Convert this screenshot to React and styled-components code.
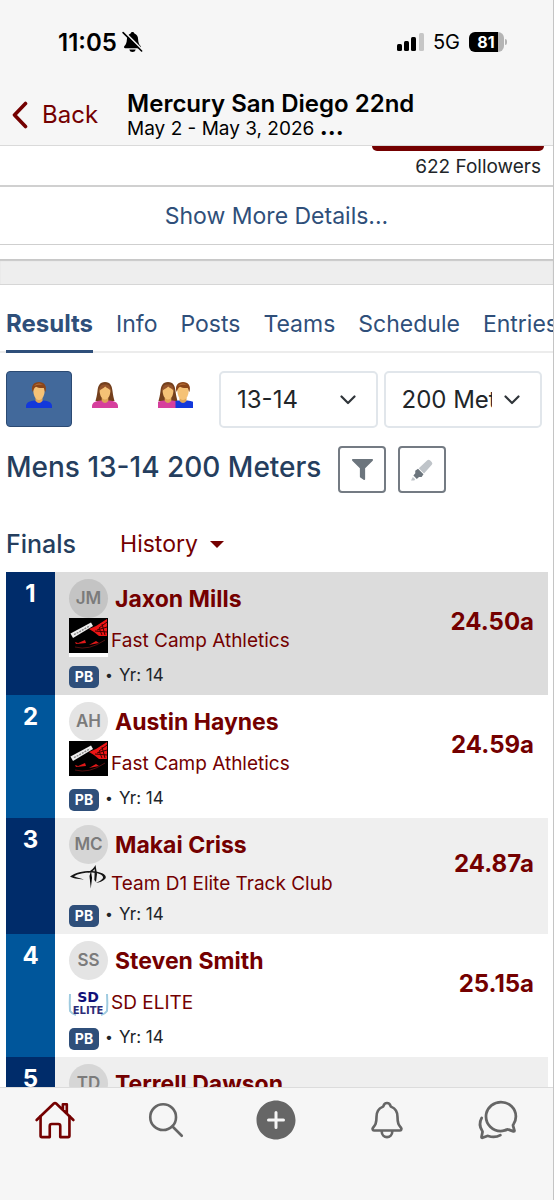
import React from "react";
import styled, { createGlobalStyle, css } from "styled-components";
import {
  IoHomeOutline,
  IoSearchOutline,
  IoAddCircle,
  IoNotificationsOutline,
  IoChatbubblesOutline,
} from "react-icons/io5";
import { FaFilter } from "react-icons/fa";

const GlobalStyle = createGlobalStyle`
  * { box-sizing: border-box; }
  body {
    margin: 0;
    font-family: Inter, "Liberation Sans", sans-serif;
    color: #212529;
    background: #fff;
  }
  button, select { font: inherit; color: inherit; margin: 0; }
  button { cursor: pointer; }
  svg { display: block; }
`;

const maroon = "#740000";
const navy = "#2f4f7a";

const Screen = styled.div`
  height: 100vh;
  display: flex;
  flex-direction: column;
  border-right: 1px solid #c4c4c4;
`;

const StatusBar = styled.div`
  display: flex;
  justify-content: space-between;
  align-items: center;
  height: 84px;
  padding: 0 46px 0 58px;
  background: #f6f6f6;
  color: #000;
`;

const StatusGroup = styled.div`
  display: flex;
  align-items: center;
  gap: ${(p) => p.$gap}px;
`;

const Clock = styled.span`
  font-size: 24px;
  font-weight: 600;
`;

const Network = styled.span`
  font-size: 20px;
`;

const Battery = styled.span`
  display: flex;
  align-items: center;
  gap: 1px;
`;

const BatteryLevel = styled.span`
  width: 35px;
  height: 20px;
  padding-right: 1px;
  border-radius: 6px;
  background: linear-gradient(90deg, #000 84%, #b4b4b4 84%);
  color: #fff;
  font-size: 16px;
  font-weight: 700;
  line-height: 20px;
  text-align: center;
`;

const BatteryTip = styled.span`
  width: 2px;
  height: 6px;
  border-radius: 0 2px 2px 0;
  background: #b4b4b4;
`;

const TitleBar = styled.header`
  display: flex;
  align-items: center;
  gap: 29px;
  height: 62px;
  padding: 0 12px;
  background: #f6f6f6;
  border-bottom: 1px solid #dadada;
`;

const BackButton = styled.button`
  display: flex;
  align-items: center;
  gap: 14px;
  padding: 0;
  border: 0;
  background: none;
  color: ${maroon};
  font-size: 24px;
`;

const TitleBlock = styled.div`
  color: #000;
`;

const MeetTitle = styled.h1`
  margin: 0;
  font-size: 24px;
  line-height: 27px;
  font-weight: 600;
`;

const MeetDates = styled.p`
  margin: 0;
  font-size: 19px;
  line-height: 22px;
  b { font-size: 24px; line-height: 20px; font-weight: 700; }
`;

const Content = styled.main`
  flex: 1;
  min-height: 0;
  overflow: hidden auto;
  scrollbar-width: none;
`;

const FollowArea = styled.section`
  display: flex;
  flex-direction: column;
  align-items: flex-end;
  padding: 0 9px;
  height: 41px;
  border-bottom: 2px solid #d0d0d0;
`;

const FollowButton = styled.button`
  width: 172px;
  height: 5px;
  padding: 0;
  border: 0;
  border-radius: 0 0 8px 8px;
  background: ${maroon};
`;

const Followers = styled.span`
  padding-right: 3px;
  font-size: 19px;
  line-height: 32px;
`;

const MoreButton = styled.button`
  display: block;
  width: 100%;
  height: 58px;
  padding: 0;
  border: 0;
  border-bottom: 1px solid #cfcfcf;
  background: #fff;
  color: ${navy};
  font-size: 23px;
`;

const Divider = styled.div`
  height: 40px;
  border-top: 14px solid #fff;
  border-bottom: 1px solid #d6d6d6;
  background: #eee;
  box-shadow: inset 0 2px 1px #c8c8c8;
`;

const Tabs = styled.nav`
  display: flex;
  gap: 23px;
  height: 68px;
  padding: 0 6px;
  overflow: hidden;
  box-shadow: inset 0 -2px 0 #ececec;
`;

const Tab = styled.a`
  display: flex;
  align-items: center;
  padding-top: 12px;
  border-bottom: 3px solid ${(p) => (p.$active ? navy : "transparent")};
  color: ${navy};
  font-size: ${(p) => (p.$active ? 24 : 23)}px;
  font-weight: ${(p) => (p.$active ? 700 : 400)};
  text-decoration: none;
  white-space: nowrap;
`;

const Filters = styled.div`
  display: flex;
  gap: 6px;
  padding: 18px 11px 0 6px;
`;

const GenderGroup = styled.div`
  display: flex;
`;

const GenderButton = styled.button`
  display: flex;
  height: 56px;
  padding: 9px 19px 0;
  border: 1px solid ${(p) => (p.$active ? "#2b4a73" : "transparent")};
  border-radius: 4px;
  background: ${(p) => (p.$active ? "#42699b" : "transparent")};
`;

const SelectBox = styled.label`
  flex: 1;
  min-width: 0;
  display: grid;
  align-items: center;
  > * { grid-area: 1 / 1; }
  > svg { justify-self: end; margin-right: 22px; pointer-events: none; }
`;

const Select = styled.select`
  appearance: none;
  width: 100%;
  height: 57px;
  padding: 0 48px 0 16px;
  border: 2px solid #e1e6eb;
  border-radius: 5px;
  background: #fff;
  font-size: 24px;
`;

const EventRow = styled.div`
  display: flex;
  align-items: center;
  gap: 12px;
  padding: 18px 6px 0;
`;

const EventTitle = styled.h2`
  margin: 0;
  padding: 0 5px 6px 0;
  color: #253e5e;
  font-size: 28px;
  line-height: 36px;
  font-weight: 500;
  white-space: nowrap;
`;

const ToolButton = styled.button`
  display: flex;
  align-items: center;
  justify-content: center;
  width: 48px;
  height: 47px;
  padding: 0;
  border: 2px solid #747b83;
  border-radius: 4px;
  background: #fff;
  color: #6c757d;
`;

const RoundRow = styled.div`
  display: flex;
  align-items: center;
  gap: 44px;
  height: 79px;
  padding: 23px 6px 0;
`;

const RoundTitle = styled.h3`
  margin: 0;
  color: #253e5e;
  font-size: 25px;
  font-weight: 500;
`;

const HistoryButton = styled.button`
  display: flex;
  align-items: center;
  gap: 12px;
  padding: 0;
  border: 0;
  background: none;
  color: ${maroon};
  font-size: 23px;
`;

const TableWrap = styled.div`
  padding: 0 5px 0 6px;
`;

const Table = styled.table`
  width: 100%;
  border-collapse: collapse;
`;

const Row = styled.tr`
  background: ${(p) => p.$bg};
`;

const cell = css`
  padding: 0;
  vertical-align: top;
`;

const RankCell = styled.td`
  ${cell}
  width: 49px;
  padding-top: 7px;
  background: ${(p) => (p.$dark ? "#002c6a" : "#00569b")};
  color: #fff;
  font-size: 24px;
  line-height: 30px;
  font-weight: 700;
  text-align: center;
`;

const AthleteCell = styled.td`
  ${cell}
  padding: 7px 0 7px 14px;
`;

const TimeCell = styled.td`
  padding: 0 14px 25px 0;
  text-align: right;
  vertical-align: middle;
`;

const TimeLink = styled.a`
  color: ${maroon};
  font-size: 24px;
  font-weight: 700;
  text-decoration: none;
`;

const AthleteLine = styled.div`
  display: flex;
  align-items: center;
  gap: 7px;
`;

const Avatar = styled.span`
  width: 39px;
  height: 39px;
  border-radius: 50%;
  background: ${(p) => p.$bg};
  color: #7b7b7b;
  font-size: 17px;
  line-height: 39px;
  font-weight: 600;
  text-align: center;
`;

const AthleteLink = styled.a`
  color: ${maroon};
  font-size: 23px;
  font-weight: 700;
  text-decoration: none;
`;

const TeamLine = styled.div`
  display: flex;
  align-items: center;
  gap: 3px;
  height: ${(p) => (p.$short ? 41 : 48)}px;
`;

const LogoSlot = styled.span`
  align-self: ${(p) => p.$align};
  width: 39px;
`;

const TeamLink = styled.a`
  padding-bottom: 2px;
  color: ${maroon};
  font-size: 19px;
  line-height: 24px;
  text-decoration: none;
`;

const MetaLine = styled.div`
  display: flex;
  align-items: flex-start;
  gap: 6px;
  height: 22px;
  font-size: 17px;
  line-height: 18px;
`;

const Dot = styled.span`
  font-size: 14px;
`;

const Badge = styled.span`
  width: 30px;
  height: 22px;
  border-radius: 5px;
  background: ${navy};
  color: #fff;
  font-size: 14px;
  line-height: 22px;
  font-weight: 700;
  text-align: center;
`;

const BottomNav = styled.nav`
  display: flex;
  height: 113px;
  padding-top: 10px;
  border-top: 1px solid #dcdcdc;
  background: #f6f6f6;
`;

const NavButton = styled.button`
  display: flex;
  flex: 1;
  justify-content: center;
  align-items: center;
  height: 44px;
  padding: 0;
  border: 0;
  background: none;
  color: ${(p) => (p.$active ? maroon : "#666")};
`;

const MutedBell = () => (
  <svg width="21" height="22" viewBox="0 0 21 22" aria-hidden="true">
    <path d="M10.5 1C11.6 1 12.2 1.6 12.4 2.5C15 3.4 16 5.6 16.1 8.2C16.3 12 17.2 13.6 18.6 15.1C19.3 16 19 17.3 17.8 17.3H3.2C2 17.3 1.7 16 2.4 15.1C3.8 13.6 4.7 12 4.9 8.2C5 5.6 6 3.4 8.6 2.5C8.8 1.6 9.4 1 10.5 1Z" fill="#000" />
    <path d="M7.3 18.6H13.7C13.3 20.3 12.1 21.1 10.5 21.1S7.7 20.3 7.3 18.6Z" fill="#000" />
    <path d="M2.4 .8L20.6 19" stroke="#f6f6f6" strokeWidth="1.7" />
    <path d="M1.1 1.6L19.6 20" stroke="#000" strokeWidth="1.6" strokeLinecap="round" />
  </svg>
);

const Signal = () => (
  <svg width="27" height="18" viewBox="0 0 27 18" aria-hidden="true">
    <rect x="0" y="11" width="5" height="7" rx="1.5" />
    <rect x="7" y="8" width="5" height="10" rx="1.5" />
    <rect x="14" y="4" width="5" height="14" rx="1.5" />
    <rect x="22" y="0" width="5" height="18" rx="1.5" fill="#c6c6c6" />
  </svg>
);

const BackChevron = () => (
  <svg width="16" height="28" viewBox="0 0 16 28" fill="none" aria-hidden="true">
    <path d="M13.5 2.5L2.5 14L13.5 25.5" stroke="currentColor" strokeWidth="3.6" strokeLinecap="round" strokeLinejoin="round" />
  </svg>
);

const SelectChevron = () => (
  <svg width="16" height="10" viewBox="0 0 16 10" fill="none" aria-hidden="true">
    <path d="M1.5 1.5L8 8L14.5 1.5" stroke="#30353a" strokeWidth="2.2" strokeLinecap="round" strokeLinejoin="round" />
  </svg>
);

const Caret = () => (
  <svg width="14" height="7" viewBox="0 0 14 7" aria-hidden="true">
    <path d="M0 0H14L7 7Z" fill="currentColor" />
  </svg>
);

const Highlighter = () => (
  <svg width="22" height="22" viewBox="0 0 22 22" aria-hidden="true">
    <path d="M7.8 9.2L16.3 1.2Q17.7 0 19.2 1.4L20.7 3Q22 4.5 20.8 5.8L13 14.5Z" fill="#bfc4c9" />
    <path d="M7 9.8L12.5 15.3L10.6 18.1L8 18L5.8 20L2.4 16.5L4.3 14.3L4.2 11.8Z" fill="#6c757d" />
    <path d="M1.8 18L4.2 20.3L3.3 21.4L0 21.5Z" fill="#bfc4c9" />
  </svg>
);

const Man = () => (
  <g>
    <path d="M0 27V24.5C.5 21 4 20 8.5 19.4H17.5C22 20 25.5 21 26 24.5V27Z" fill="#1238db" />
    <path d="M9.5 17H16.5V20Q13 24 9.5 20Z" fill="#dda456" />
    <path d="M7.4 9C7.4 5 10 3 13 3S18.6 5 18.6 9C19 14 16.3 19 13 19S7 14 7.4 9Z" fill="#f5c276" />
    <path d="M6.6 11C4.5 5 7.8 1 13 1S21.4 5 19.4 11C18.5 10 18.5 8.3 17.8 7C14 7.2 11.6 6.8 10 5.8C8 7 7.6 9 6.6 11Z" fill="#8a4519" />
    <path d="M8 5C10 2 14 1.5 17 4C14 3.6 11 3.6 8 5Z" fill="#b26b35" />
  </g>
);

const Woman = () => (
  <g>
    <path d="M13 1C7.5 1 6 5 5.5 10C5 14.5 4.3 17 3.5 20H22.5C21.7 17 21 14.5 20.5 10C20 5 18.5 1 13 1Z" fill="#74401d" />
    <path d="M0 27V24.5C.5 21 4 20 8.5 19.4H17.5C22 20 25.5 21 26 24.5V27Z" fill="#d63f9d" />
    <path d="M9.7 16.5H16.3V20Q13 24.2 9.7 20Z" fill="#dda456" />
    <path d="M7.6 9C8 6 10 4.5 13 4.5S18 6 18.4 9C18.6 14 16.2 18.5 13 18.5S7.4 14 7.6 9Z" fill="#f5c276" />
    <path d="M7.4 10C7.4 5 9 3.6 13 3.6S18.6 5 18.6 10C17.5 7.5 15 7.2 13.2 5.4C11.8 7.5 8.6 7.7 7.4 10Z" fill="#95532a" />
  </g>
);

const Couple = () => (
  <svg width="35" height="27" viewBox="3 0 35 27" aria-hidden="true">
    <clipPath id="man-in-front">
      <path d="M0 0H40V27H20.5V18.5H0Z" />
    </clipPath>
    <Woman />
    <g clipPath="url(#man-in-front)">
      <g transform="translate(15 0)">
        <Man />
      </g>
    </g>
  </svg>
);

const FastCampLogo = () => (
  <svg width="39" height="39" viewBox="0 0 39 39" role="img" aria-label="Fast Camp Athletics logo">
    <path d="M0 35H39V39H0Z" fill="#fff" />
    <path d="M0 0H39V35H0Z" />
    <path d="M20 11L27 8L38 1V18L30 18L25 14Z" fill="#ed1515" />
    <path d="M38 4L30 10M38 9L28 12M38 14L26 13M33 6L36 17M30 10L33 17" stroke="#3a0000" fill="none" />
    <path d="M7 26L16 22L17 25ZM20 27L27 23L30 25ZM6 24L9 25L7 26Z" fill="#e01818" />
    <path d="M6 29Q20 33 36 22" stroke="#551111" fill="none" />
    <path d="M1.5 15.5L22 4.5L24 8L4 20Z" fill="#eee" />
    <path d="M5 16.7L21 7.8" stroke="#888" strokeWidth="1.4" strokeDasharray="2 1" />
  </svg>
);

const D1Logo = () => (
  <svg width="39" height="26" viewBox="0 0 39 26" role="img" aria-label="Team D1 logo">
    <path d="M15 15.5C8 15 3 14 1 12.5C7 8 17 6.5 25 7.2C34 8 39 12 36 15C34 17.5 30 18.5 27 18.8C32 16.8 36 14 33 11.5C29 7.5 13 7.5 5 12.2C8 13.5 12 14.2 15 15.5Z" fill="#161616" />
    <path d="M22 7L23 14L21.8 24.5L20.5 12Z" />
    <path d="M18.5 8.5Q24 6 26.5 1L28 10L27 18L25.3 16L25.8 5Q23 8.5 18.5 8.5Z" fill="#161616" />
  </svg>
);

const LogoText = styled.text`
  font-family: "DejaVu Sans", sans-serif;
  font-weight: 700;
  text-anchor: middle;
`;

const SdLogo = () => (
  <svg width="39" height="28" viewBox="0 0 39 28" overflow="visible" role="img" aria-label="SD Elite logo">
    <path d="M1 4Q.5 14 1 21Q3 24 7 25M38 4Q38.7 14 38 21Q36 24 32 25" stroke="#9fcbe0" strokeWidth="2" fill="none" />
    <LogoText x="19" y="12" fontSize="14" fill="#11117a">SD</LogoText>
    <LogoText x="19" y="24" fontSize="10" fill="#2c2c78">ELITE</LogoText>
  </svg>
);

const logos = { fast: FastCampLogo, d1: D1Logo, sd: SdLogo };

const results = [
  { rank: 1, initials: "JM", name: "Jaxon Mills", team: "Fast Camp Athletics", logo: "fast", time: "24.50a", bg: "#dcdcdc", avatar: "#c4c4c4" },
  { rank: 2, initials: "AH", name: "Austin Haynes", team: "Fast Camp Athletics", logo: "fast", time: "24.59a", bg: "#fff", avatar: "#e4e4e4" },
  { rank: 3, initials: "MC", name: "Makai Criss", team: "Team D1 Elite Track Club", logo: "d1", time: "24.87a", bg: "#efefef", avatar: "#d6d6d6" },
  { rank: 4, initials: "SS", name: "Steven Smith", team: "SD ELITE", logo: "sd", time: "25.15a", bg: "#fff", avatar: "#e4e4e4" },
  { rank: 5, initials: "TD", name: "Terrell Dawson", bg: "#efefef", avatar: "#d6d6d6" },
];

function ResultRow({ result }) {
  const Logo = logos[result.logo];
  return (
    <Row $bg={result.bg}>
      <RankCell $dark={result.rank % 2 === 1}>{result.rank}</RankCell>
      <AthleteCell>
        <AthleteLine>
          <Avatar $bg={result.avatar}>{result.initials}</Avatar>
          <AthleteLink href="#athlete">{result.name}</AthleteLink>
        </AthleteLine>
        {result.team && (
          <>
            <TeamLine $short={result.logo === "d1"}>
              <LogoSlot $align={result.logo === "sd" ? "center" : "flex-start"}>
                <Logo />
              </LogoSlot>
              <TeamLink href="#team">{result.team}</TeamLink>
            </TeamLine>
            <MetaLine>
              <Badge>PB</Badge>
              <Dot>•</Dot>
              <span>Yr: 14</span>
            </MetaLine>
          </>
        )}
      </AthleteCell>
      <TimeCell>{result.time && <TimeLink href="#result">{result.time}</TimeLink>}</TimeCell>
    </Row>
  );
}

const tabs = ["Results", "Info", "Posts", "Teams", "Schedule", "Entries"];

export default function App() {
  return (
    <Screen>
      <GlobalStyle />
      <StatusBar>
        <StatusGroup $gap={5}>
          <Clock>11:05</Clock>
          <MutedBell />
        </StatusGroup>
        <StatusGroup $gap={9}>
          <Signal />
          <Network>5G</Network>
          <Battery>
            <BatteryLevel>81</BatteryLevel>
            <BatteryTip />
          </Battery>
        </StatusGroup>
      </StatusBar>
      <TitleBar>
        <BackButton type="button">
          <BackChevron />
          Back
        </BackButton>
        <TitleBlock>
          <MeetTitle>Mercury San Diego 22nd</MeetTitle>
          <MeetDates>
            May 2 - May 3, 2026 <b>...</b>
          </MeetDates>
        </TitleBlock>
      </TitleBar>
      <Content>
        <FollowArea>
          <FollowButton type="button" aria-label="Follow" />
          <Followers>622 Followers</Followers>
        </FollowArea>
        <MoreButton type="button">Show More Details...</MoreButton>
        <Divider />
        <Tabs>
          {tabs.map((tab, i) => (
            <Tab key={tab} href={`#${tab.toLowerCase()}`} $active={i === 0}>
              {tab}
            </Tab>
          ))}
        </Tabs>
        <Filters>
          <GenderGroup>
            <GenderButton type="button" aria-label="Men" $active>
              <svg width="26" height="27" viewBox="0 0 26 27"><Man /></svg>
            </GenderButton>
            <GenderButton type="button" aria-label="Women">
              <svg width="26" height="27" viewBox="0 0 26 27"><Woman /></svg>
            </GenderButton>
            <GenderButton type="button" aria-label="Everyone">
              <Couple />
            </GenderButton>
          </GenderGroup>
          <SelectBox>
            <Select aria-label="Division" defaultValue="13-14">
              <option>13-14</option>
            </Select>
            <SelectChevron />
          </SelectBox>
          <SelectBox>
            <Select aria-label="Event" defaultValue="200 Meters">
              <option>200 Meters</option>
            </Select>
            <SelectChevron />
          </SelectBox>
        </Filters>
        <EventRow>
          <EventTitle>Mens 13-14 200 Meters</EventTitle>
          <ToolButton type="button" aria-label="Filter">
            <FaFilter size={21} />
          </ToolButton>
          <ToolButton type="button" aria-label="Highlight">
            <Highlighter />
          </ToolButton>
        </EventRow>
        <RoundRow>
          <RoundTitle>Finals</RoundTitle>
          <HistoryButton type="button">
            History
            <Caret />
          </HistoryButton>
        </RoundRow>
        <TableWrap>
          <Table>
            <tbody>
              {results.map((r) => (
                <ResultRow key={r.rank} result={r} />
              ))}
            </tbody>
          </Table>
        </TableWrap>
      </Content>
      <BottomNav>
        <NavButton type="button" aria-label="Home" $active>
          <IoHomeOutline size={42} />
        </NavButton>
        <NavButton type="button" aria-label="Search">
          <IoSearchOutline size={42} />
        </NavButton>
        <NavButton type="button" aria-label="Add">
          <IoAddCircle size={48} />
        </NavButton>
        <NavButton type="button" aria-label="Notifications">
          <IoNotificationsOutline size={42} />
        </NavButton>
        <NavButton type="button" aria-label="Messages">
          <IoChatbubblesOutline size={44} />
        </NavButton>
      </BottomNav>
    </Screen>
  );
}
